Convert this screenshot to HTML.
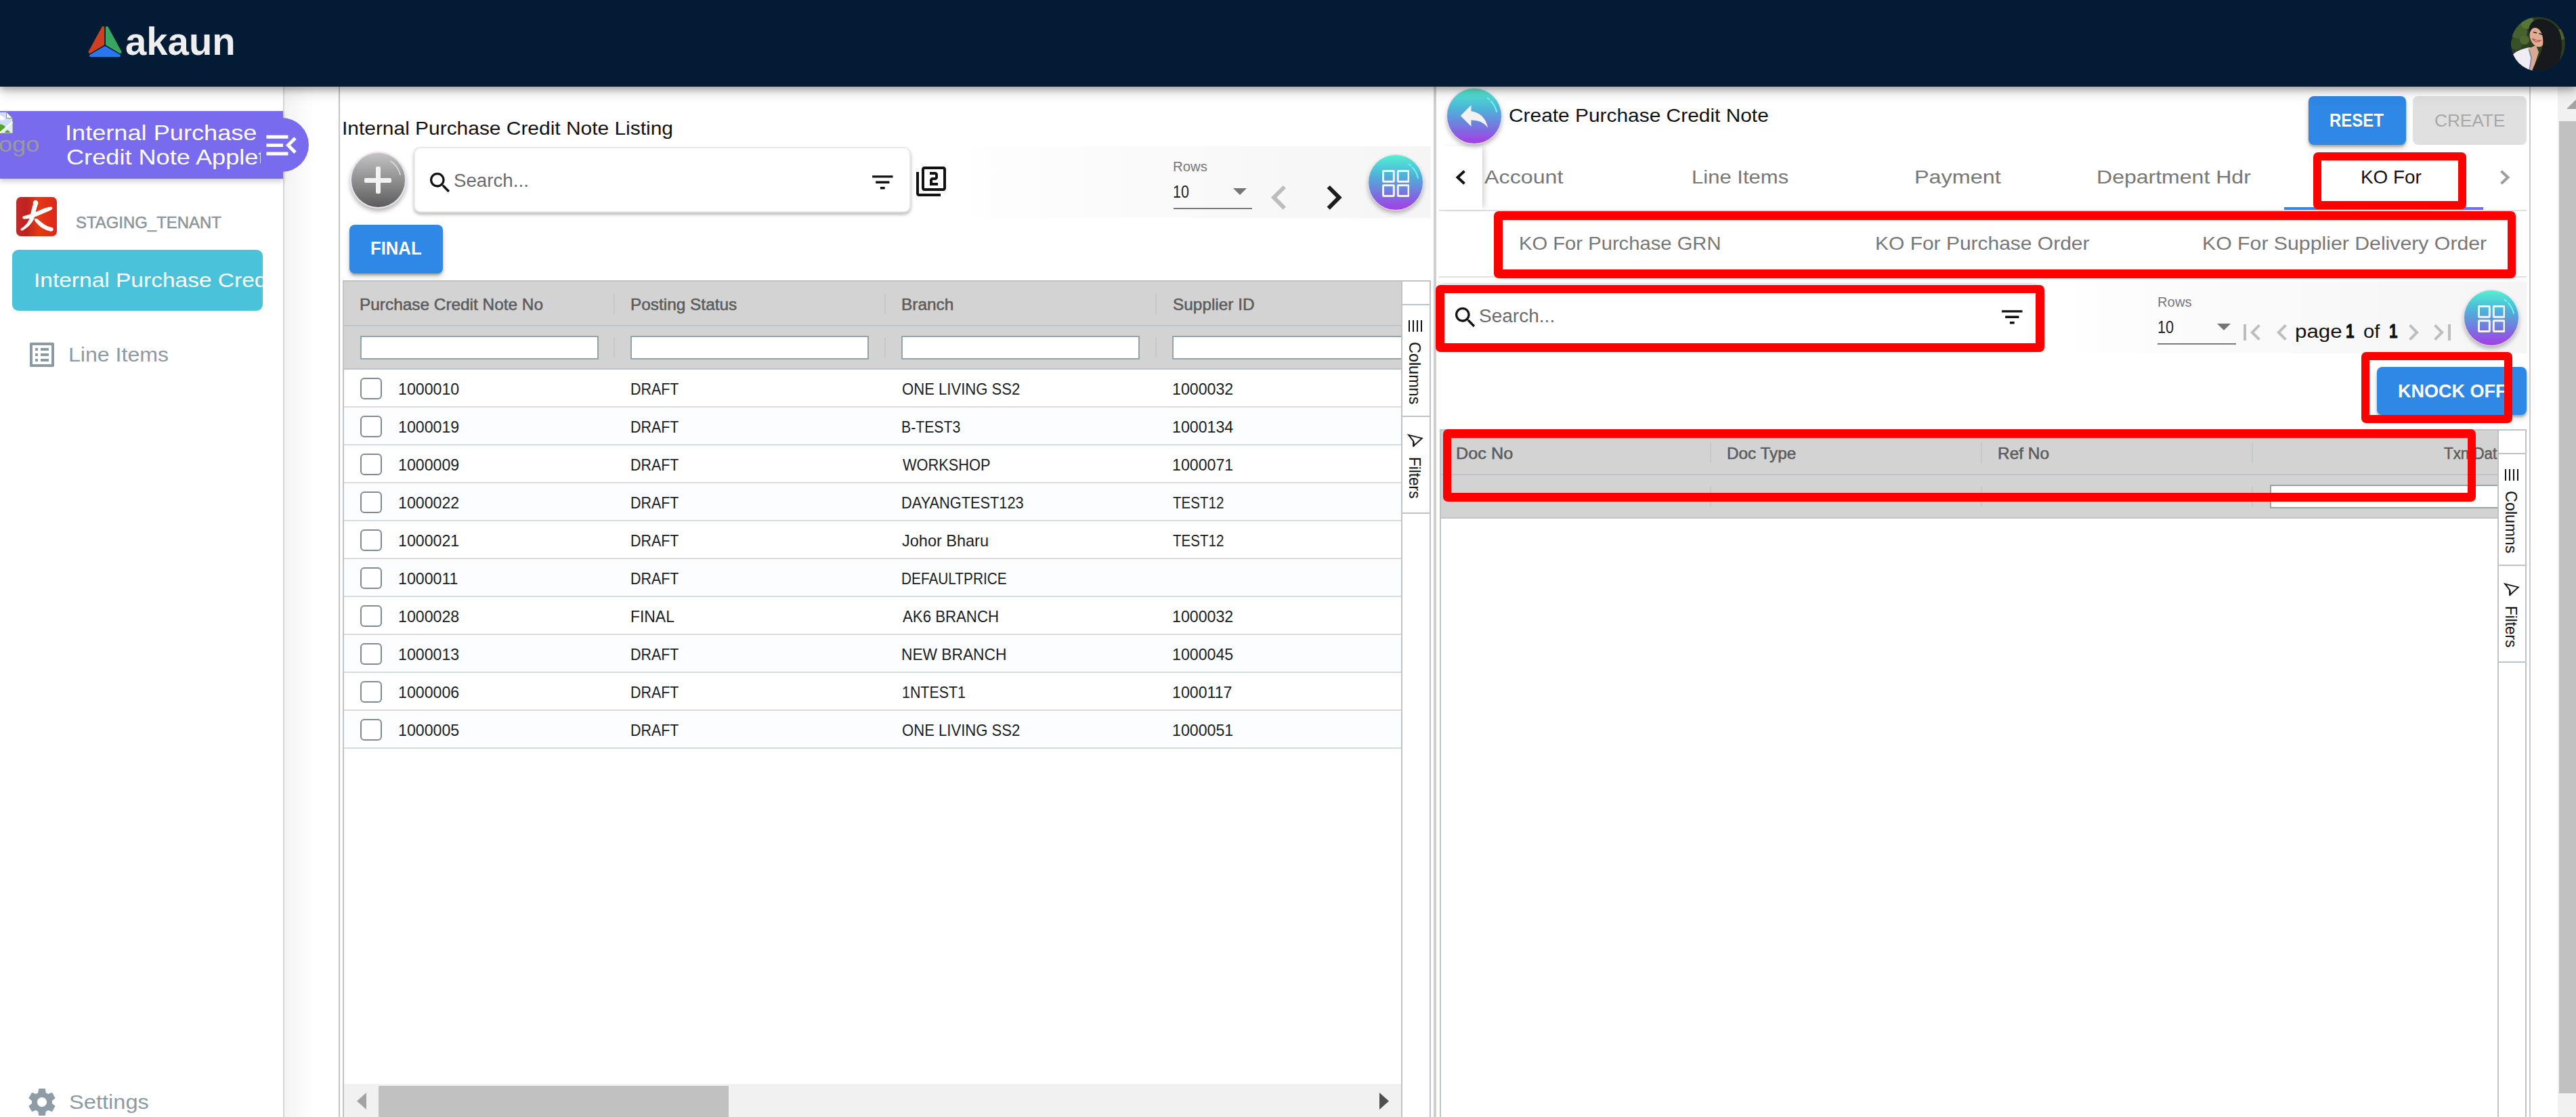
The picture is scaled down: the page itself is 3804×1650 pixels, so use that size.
<!DOCTYPE html>
<html lang="en"><head><meta charset="utf-8"><title>Internal Purchase Credit Note</title>
<style>
html,body{margin:0;padding:0;background:#fff;}
body{width:3804px;height:1650px;overflow:hidden;font-family:"Liberation Sans",sans-serif;}
.page{position:relative;width:3804px;height:1650px;overflow:hidden;background:#fff;}
.a{position:absolute;box-sizing:border-box;}
.t{position:absolute;white-space:nowrap;transform-origin:0 50%;}
.red{position:absolute;box-sizing:border-box;border:12.8px solid #fe0000;border-radius:7px;z-index:50;}
.btn{position:absolute;box-sizing:border-box;border-radius:8px;overflow:hidden;}
.blue{background:#2f88e6;box-shadow:0 3px 3px rgba(0,0,0,.22),0 5px 8px rgba(0,0,0,.16);}
.circ{position:absolute;box-sizing:border-box;width:82px;height:83px;border-radius:50%;border:1.5px solid rgba(232,220,242,.95);
 background:linear-gradient(180deg,#58f0d0 0%,#4fd2d6 18%,#4db4d8 36%,#6490dc 56%,#7f6be0 75%,#a63ee6 100%);box-shadow:0 4px 6px rgba(0,0,0,.28);}
.cb{position:absolute;box-sizing:border-box;width:32px;height:32px;border:2px solid #7f8c8d;border-radius:6px;background:#fff;}
.fi{position:absolute;box-sizing:border-box;height:35px;border:2px solid #95a5a6;background:#fff;}
.sep{position:absolute;width:2px;background:#c4c9cc;}
.rot{position:absolute;white-space:nowrap;transform-origin:0 0;transform:rotate(90deg);font-size:24px;line-height:24px;color:#111;}
</style></head><body><div class="page">
<div class="a" style="left:0px;top:128px;width:419px;height:1522px;background:#fff;"></div>
<div class="a" style="left:418px;top:128px;width:2px;height:1522px;background:#d6d6d6;"></div>
<div class="a" style="left:420px;top:128px;width:80px;height:1522px;background:linear-gradient(90deg,#f3f3f3 0%,#fbfbfb 35%,#fff 55%);"></div>
<div class="a" style="left:500px;top:128px;width:2px;height:1522px;background:#c4c4c4;"></div>
<div class="a" style="left:0;top:164px;width:418px;height:100px;background:#796bee;box-shadow:0 4px 7px rgba(0,0,0,.2);"></div>
<div class="a" style="left:376px;top:174px;width:80px;height:80px;border-radius:50%;background:#796bee;"></div>
<div class="a" style="left:0;top:164px;width:460px;height:100px;overflow:hidden;">
<svg class="a" style="left:-12.7px;top:0.5px;" width="32" height="32" viewBox="0 0 32 32"><path d="M0.5 0.5H22.5L31.5 9.5V31.5H0.5z" fill="#cfdef7" stroke="#8e8e8e" stroke-width="1"/><circle cx="13.5" cy="9" r="3.6" fill="#fff"/><circle cx="17.5" cy="10.2" r="2.6" fill="#fff"/><path d="M2 31C7 15 19 14 26 31z" fill="#57a52e"/><path d="M13 31.5L31.5 15.5V31.5z" fill="#e3ecfb"/><path d="M12 32L31.5 15" stroke="#fff" stroke-width="2.2"/><path d="M20 31C22 27 25 25 28 31z" fill="#57a52e"/><path d="M22.5 0.5V9.5H31.5z" fill="#fff" stroke="#8e8e8e" stroke-width="1" stroke-linejoin="round"/></svg>
<span class="t" style="left:-9.75px;top:33.00px;font-size:32px;line-height:32px;color:#9a9a9a;transform:scaleX(1.1275);">logo</span>
<span class="t" style="left:95.61px;top:16.20px;font-size:32px;line-height:32px;color:#fff;transform:scaleX(1.1301);">Internal Purchase</span>
<div class="a" style="left:0;top:0;width:385px;height:100px;overflow:hidden;"><span class="t" style="left:97.87px;top:51.50px;font-size:32px;line-height:32px;color:#fff;transform:scaleX(1.1300);">Credit Note Applet</span></div>
</div>
<svg class="a" style="left:386.2px;top:184.9px;" width="59.2" height="59.2" viewBox="0 0 24 24"><path fill="#fff" d="M3 18h13v-2H3v2zm0-5h10v-2H3v2zm0-7v2h13V6H3zm18 9.59L17.42 12 21 8.41 19.59 7l-5 5 5 5L21 15.59z"/></svg>
<div class="a" style="left:24px;top:291px;width:60px;height:58px;border-radius:7px;background:linear-gradient(90deg,#c22a2a 0%,#bf2320 25%,#e23a12 55%,#e0241a 100%);"></div>
<svg class="a" style="left:24px;top:291px;" width="60" height="58" viewBox="0 0 60 58"><g fill="#fff"><path d="M27 5C31 3.500 34 8 31.500 12C29.500 17 28.500 24 26.500 31C23.500 39 17 45.500 9 49.500C6.500 50.500 5.500 47.500 8 46C14 42 18 37 20 30C22 23 23 15.500 25 11C24 9 25 6 27 5Z"/><path d="M10 28.500C18 26.500 27 23.500 35 19.500C41 16.500 47 14.500 52 14.500C54.500 15.500 53.500 18 51 19.500C44 22.500 37 25.500 30 28.500C24 30.500 17 32.500 12 32.500C9.500 32.500 8.500 30 10 28.500Z"/><path d="M26.500 32C31 30.500 34 35 38 38C43 42 49 44.500 54 45.500C56 49 53.500 51.500 50 50.500C42 48.500 35 44.500 31 39.500C29 37.500 27 35 26.500 32Z"/></g></svg>
<div class="a" style="left:18px;top:369px;width:370px;height:90px;border-radius:9px;background:#4ac3da;overflow:hidden;"><span class="t" style="left:32.35px;top:29.90px;font-size:30px;line-height:30px;color:#fff;transform:scaleX(1.1165);">Internal Purchase Credit Note</span></div>
<svg class="a" style="left:37.8px;top:500px;" width="48" height="48" viewBox="0 0 24 24"><path fill="#8c9aa3" d="M19 5v14H5V5h14m1.1-2H3.9c-.5 0-.9.4-.9.9v16.2c0 .4.4.9.9.9h16.2c.4 0 .9-.5.9-.9V3.9c0-.5-.5-.9-.9-.9zM11 7h6v2h-6V7zm0 4h6v2h-6v-2zm0 4h6v2h-6zM7 7h2v2H7zm0 4h2v2H7zm0 4h2v2H7z"/></svg>
<svg class="a" style="left:38.2px;top:1604px;" width="48" height="48" viewBox="0 0 24 24"><path fill="#8d9ca6" d="M19.43 12.98c.04-.32.07-.64.07-.98s-.03-.66-.07-.98l2.11-1.65c.19-.15.24-.42.12-.64l-2-3.46c-.12-.22-.39-.3-.61-.22l-2.49 1c-.52-.4-1.08-.73-1.69-.98l-.38-2.65C14.46 2.18 14.25 2 14 2h-4c-.25 0-.46.18-.49.42l-.38 2.65c-.61.25-1.17.59-1.69.98l-2.49-1c-.23-.09-.49 0-.61.22l-2 3.46c-.13.22-.07.49.12.64l2.11 1.65c-.04.32-.07.65-.07.98s.03.66.07.98l-2.11 1.65c-.19.15-.24.42-.12.64l2 3.46c.12.22.39.3.61.22l2.49-1c.52.4 1.08.73 1.69.98l.38 2.65c.03.24.24.42.49.42h4c.25 0 .46-.18.49-.42l.38-2.65c.61-.25 1.17-.59 1.69-.98l2.49 1c.23.09.49 0 .61-.22l2-3.46c.12-.22.07-.49-.12-.64l-2.11-1.65zM12 15.5c-1.93 0-3.5-1.57-3.5-3.5s1.57-3.5 3.5-3.5 3.5 1.57 3.5 3.5-1.57 3.5-3.5 3.5z"/></svg>
<div class="a" style="left:1400px;top:216px;width:713px;height:106px;background:linear-gradient(90deg,#fff 0%,#fcfcfc 20%,#fafafa 42%,#f7f7f7 75%,#f5f5f5 100%);"></div>
<div class="a" style="left:516.5px;top:224px;width:83px;height:84px;border-radius:50%;border:2px solid #e9e2ee;background:linear-gradient(180deg,#c4c4c4 0%,#9a9a9a 40%,#5c5c5c 100%);box-shadow:0 4px 6px rgba(0,0,0,.3);"></div>
<div class="a" style="left:538px;top:262.5px;width:40px;height:7px;background:#f2f2f2;border-radius:2px;"></div>
<div class="a" style="left:554.5px;top:246px;width:7px;height:40px;background:#f2f2f2;border-radius:2px;"></div>
<svg class="a" style="left:517px;top:225px;" width="82" height="82" viewBox="0 0 82 82"><path d="M60 13a34 34 0 0 1 14 20" fill="none" stroke="#dcdcdc" stroke-width="1.6" stroke-linecap="round"/></svg>
<div class="a" style="left:611px;top:217px;width:733.5px;height:97px;border-radius:10px;background:#fff;border:2px solid #e8e8e8;box-shadow:0 3px 5px rgba(0,0,0,.28);"></div>
<svg class="a" style="left:630px;top:250px;" width="40" height="40" viewBox="0 0 24 24"><path fill="#111" d="M15.5 14h-.79l-.28-.27C15.41 12.59 16 11.11 16 9.5 16 5.91 13.09 3 9.5 3S3 5.91 3 9.5 5.91 16 9.5 16c1.61 0 3.09-.59 4.23-1.57l.27.28v.79l5 4.99L20.49 19l-4.99-5zm-6 0C7.01 14 5 11.99 5 9.5S7.01 5 9.5 5 14 7.01 14 9.5 11.99 14 9.5 14z"/></svg>
<svg class="a" style="left:1282.5px;top:248.6px;" width="40.6" height="40.6" viewBox="0 0 24 24"><path fill="#111" d="M10 18h4v-2h-4v2zM3 6v2h18V6H3zm3 7h12v-2H6v2z"/></svg>
<svg class="a" style="left:1351px;top:244px;" width="48" height="48" viewBox="0 0 24 24"><path fill="#111" d="M3 5H1v16c0 1.1.9 2 2 2h16v-2H3V5zm18-4H7c-1.1 0-2 .9-2 2v14c0 1.1.9 2 2 2h14c1.1 0 2-.9 2-2V3c0-1.1-.9-2-2-2zm0 16H7V3h14v14zm-4-4h-4v-2h2c1.1 0 2-.89 2-2V7c0-1.11-.9-2-2-2h-4v2h4v2h-2c-1.1 0-2 .89-2 2v4h6v-2z"/></svg>
<svg class="a" style="left:1821px;top:278px;" width="20" height="10" viewBox="0 0 20 10"><path d="M0 0h20L10 10z" fill="#757575"/></svg>
<div class="a" style="left:1733px;top:307px;width:116px;height:2px;background:#7a7a7a;"></div>
<svg class="a" style="left:1853px;top:256px;" width="71.5" height="71.5" viewBox="0 0 24 24"><path fill="#bdbdbd" d="M15.41 7.41L14 6l-6 6 6 6 1.41-1.41L10.83 12z"/></svg>
<svg class="a" style="left:1933.5px;top:256px;" width="71.5" height="71.5" viewBox="0 0 24 24"><path fill="#1d1d1d" d="M10 6L8.59 7.41 13.17 12l-4.58 4.59L10 18l6-6z"/></svg>
<div class="circ" style="left:2020px;top:228px;"></div><svg class="a" style="left:2020px;top:229px;" width="82" height="82" viewBox="0 0 82 82"><path d="M60.5 13.8a34 34 0 0 1 13.6 20.2" fill="none" stroke="#79f3ee" stroke-width="2" stroke-linecap="round" stroke-dasharray="3.5 3.5 30"/></svg>
<svg class="a" style="left:2040.7px;top:250.8px;" width="40.6" height="40" viewBox="0 0 40.6 40" fill="none" stroke="#f6f4f5" stroke-width="3"><rect x="1.5" y="1.5" width="15.8" height="15.8" rx="0.8"/><rect x="23.3" y="1.5" width="15.8" height="15.8" rx="0.8"/><rect x="1.5" y="22.7" width="15.8" height="15.8" rx="0.8"/><rect x="23.3" y="22.7" width="15.8" height="15.8" rx="0.8"/></svg>
<div class="btn blue" style="left:516px;top:332px;width:138px;height:72px;"></div>
<div class="a" style="left:506px;top:414px;width:1607px;height:1240px;border:2px solid #bdc3c7;background:#fff;"></div>
<div class="a" style="left:508px;top:416px;width:1561px;height:1234px;overflow:hidden;">
<div class="a" style="left:0px;top:0px;width:1561px;height:128px;background:#d3d3d3;"></div>
<div class="a" style="left:0px;top:64px;width:1561px;height:2px;background:#bdc3c7;"></div>
<div class="a" style="left:0px;top:128px;width:1561px;height:2px;background:#bdc3c7;"></div>
<div class="sep" style="left:398px;top:16.5px;height:31px;"></div>
<div class="sep" style="left:398px;top:81.5px;height:30px;"></div>
<div class="sep" style="left:798px;top:16.5px;height:31px;"></div>
<div class="sep" style="left:798px;top:81.5px;height:30px;"></div>
<div class="sep" style="left:1198px;top:16.5px;height:31px;"></div>
<div class="sep" style="left:1198px;top:81.5px;height:30px;"></div>
<div class="fi" style="left:24px;top:79.5px;width:352px;"></div>
<div class="fi" style="left:423px;top:79.5px;width:352px;"></div>
<div class="fi" style="left:823px;top:79.5px;width:352px;"></div>
<div class="fi" style="left:1223px;top:79.5px;width:352px;"></div>
<div class="a" style="left:0px;top:130px;width:1561px;height:56px;background:#fff;border-bottom:2px solid #d9dcde;"></div>
<div class="cb" style="left:24px;top:142px;"></div>
<div class="a" style="left:0px;top:186px;width:1561px;height:56px;background:#fcfdfe;border-bottom:2px solid #d9dcde;"></div>
<div class="cb" style="left:24px;top:198px;"></div>
<div class="a" style="left:0px;top:242px;width:1561px;height:56px;background:#fff;border-bottom:2px solid #d9dcde;"></div>
<div class="cb" style="left:24px;top:254px;"></div>
<div class="a" style="left:0px;top:298px;width:1561px;height:56px;background:#fcfdfe;border-bottom:2px solid #d9dcde;"></div>
<div class="cb" style="left:24px;top:310px;"></div>
<div class="a" style="left:0px;top:354px;width:1561px;height:56px;background:#fff;border-bottom:2px solid #d9dcde;"></div>
<div class="cb" style="left:24px;top:366px;"></div>
<div class="a" style="left:0px;top:410px;width:1561px;height:56px;background:#fcfdfe;border-bottom:2px solid #d9dcde;"></div>
<div class="cb" style="left:24px;top:422px;"></div>
<div class="a" style="left:0px;top:466px;width:1561px;height:56px;background:#fff;border-bottom:2px solid #d9dcde;"></div>
<div class="cb" style="left:24px;top:478px;"></div>
<div class="a" style="left:0px;top:522px;width:1561px;height:56px;background:#fcfdfe;border-bottom:2px solid #d9dcde;"></div>
<div class="cb" style="left:24px;top:534px;"></div>
<div class="a" style="left:0px;top:578px;width:1561px;height:56px;background:#fff;border-bottom:2px solid #d9dcde;"></div>
<div class="cb" style="left:24px;top:590px;"></div>
<div class="a" style="left:0px;top:634px;width:1561px;height:56px;background:#fcfdfe;border-bottom:2px solid #d9dcde;"></div>
<div class="cb" style="left:24px;top:646px;"></div>
<span class="t" style="left:22.97px;top:21.70px;font-size:24px;line-height:24px;color:#5c5c5c;transform:scaleX(1.0159);-webkit-text-stroke:0.55px #5c5c5c;">Purchase Credit Note No</span>
<span class="t" style="left:422.77px;top:21.70px;font-size:24px;line-height:24px;color:#5c5c5c;transform:scaleX(1.0159);-webkit-text-stroke:0.55px #5c5c5c;">Posting Status</span>
<span class="t" style="left:822.77px;top:21.70px;font-size:24px;line-height:24px;color:#5c5c5c;transform:scaleX(1.0159);-webkit-text-stroke:0.55px #5c5c5c;">Branch</span>
<span class="t" style="left:1223.78px;top:21.70px;font-size:24px;line-height:24px;color:#5c5c5c;transform:scaleX(1.0159);-webkit-text-stroke:0.55px #5c5c5c;">Supplier ID</span>
<span class="t" style="left:80.47px;top:147.30px;font-size:24px;line-height:24px;color:#181d1f;transform:scaleX(0.9648);">1000010</span>
<span class="t" style="left:423.02px;top:147.30px;font-size:24px;line-height:24px;color:#181d1f;transform:scaleX(0.8923);">DRAFT</span>
<span class="t" style="left:823.58px;top:147.30px;font-size:24px;line-height:24px;color:#181d1f;transform:scaleX(0.9203);">ONE LIVING SS2</span>
<span class="t" style="left:1223.27px;top:147.30px;font-size:24px;line-height:24px;color:#181d1f;transform:scaleX(0.9648);">1000032</span>
<span class="t" style="left:80.47px;top:203.30px;font-size:24px;line-height:24px;color:#181d1f;transform:scaleX(0.9648);">1000019</span>
<span class="t" style="left:423.02px;top:203.30px;font-size:24px;line-height:24px;color:#181d1f;transform:scaleX(0.8923);">DRAFT</span>
<span class="t" style="left:822.73px;top:203.30px;font-size:24px;line-height:24px;color:#181d1f;transform:scaleX(0.8833);">B-TEST3</span>
<span class="t" style="left:1223.27px;top:203.30px;font-size:24px;line-height:24px;color:#181d1f;transform:scaleX(0.9648);">1000134</span>
<span class="t" style="left:80.47px;top:259.30px;font-size:24px;line-height:24px;color:#181d1f;transform:scaleX(0.9648);">1000009</span>
<span class="t" style="left:423.02px;top:259.30px;font-size:24px;line-height:24px;color:#181d1f;transform:scaleX(0.8923);">DRAFT</span>
<span class="t" style="left:824.50px;top:259.30px;font-size:24px;line-height:24px;color:#181d1f;transform:scaleX(0.9085);">WORKSHOP</span>
<span class="t" style="left:1223.27px;top:259.30px;font-size:24px;line-height:24px;color:#181d1f;transform:scaleX(0.9648);">1000071</span>
<span class="t" style="left:80.47px;top:315.30px;font-size:24px;line-height:24px;color:#181d1f;transform:scaleX(0.9648);">1000022</span>
<span class="t" style="left:423.02px;top:315.30px;font-size:24px;line-height:24px;color:#181d1f;transform:scaleX(0.8923);">DRAFT</span>
<span class="t" style="left:822.69px;top:315.30px;font-size:24px;line-height:24px;color:#181d1f;transform:scaleX(0.9071);">DAYANGTEST123</span>
<span class="t" style="left:1224.20px;top:315.30px;font-size:24px;line-height:24px;color:#181d1f;transform:scaleX(0.8563);">TEST12</span>
<span class="t" style="left:80.47px;top:371.30px;font-size:24px;line-height:24px;color:#181d1f;transform:scaleX(0.9648);">1000021</span>
<span class="t" style="left:423.02px;top:371.30px;font-size:24px;line-height:24px;color:#181d1f;transform:scaleX(0.8923);">DRAFT</span>
<span class="t" style="left:823.52px;top:371.30px;font-size:24px;line-height:24px;color:#181d1f;transform:scaleX(0.9789);">Johor Bharu</span>
<span class="t" style="left:1224.20px;top:371.30px;font-size:24px;line-height:24px;color:#181d1f;transform:scaleX(0.8563);">TEST12</span>
<span class="t" style="left:80.47px;top:427.30px;font-size:24px;line-height:24px;color:#181d1f;transform:scaleX(0.9648);">1000011</span>
<span class="t" style="left:423.02px;top:427.30px;font-size:24px;line-height:24px;color:#181d1f;transform:scaleX(0.8923);">DRAFT</span>
<span class="t" style="left:822.77px;top:427.30px;font-size:24px;line-height:24px;color:#181d1f;transform:scaleX(0.8661);">DEFAULTPRICE</span>
<span class="t" style="left:80.47px;top:483.30px;font-size:24px;line-height:24px;color:#181d1f;transform:scaleX(0.9648);">1000028</span>
<span class="t" style="left:422.89px;top:483.30px;font-size:24px;line-height:24px;color:#181d1f;transform:scaleX(0.9538);">FINAL</span>
<span class="t" style="left:824.50px;top:483.30px;font-size:24px;line-height:24px;color:#181d1f;transform:scaleX(0.9257);">AK6 BRANCH</span>
<span class="t" style="left:1223.27px;top:483.30px;font-size:24px;line-height:24px;color:#181d1f;transform:scaleX(0.9648);">1000032</span>
<span class="t" style="left:80.47px;top:539.30px;font-size:24px;line-height:24px;color:#181d1f;transform:scaleX(0.9648);">1000013</span>
<span class="t" style="left:423.02px;top:539.30px;font-size:24px;line-height:24px;color:#181d1f;transform:scaleX(0.8923);">DRAFT</span>
<span class="t" style="left:822.61px;top:539.30px;font-size:24px;line-height:24px;color:#181d1f;transform:scaleX(0.9469);">NEW BRANCH</span>
<span class="t" style="left:1223.27px;top:539.30px;font-size:24px;line-height:24px;color:#181d1f;transform:scaleX(0.9648);">1000045</span>
<span class="t" style="left:80.47px;top:595.30px;font-size:24px;line-height:24px;color:#181d1f;transform:scaleX(0.9648);">1000006</span>
<span class="t" style="left:423.02px;top:595.30px;font-size:24px;line-height:24px;color:#181d1f;transform:scaleX(0.8923);">DRAFT</span>
<span class="t" style="left:824.22px;top:595.30px;font-size:24px;line-height:24px;color:#181d1f;transform:scaleX(0.8922);">1NTEST1</span>
<span class="t" style="left:1223.27px;top:595.30px;font-size:24px;line-height:24px;color:#181d1f;transform:scaleX(0.9648);">1000117</span>
<span class="t" style="left:80.47px;top:651.30px;font-size:24px;line-height:24px;color:#181d1f;transform:scaleX(0.9648);">1000005</span>
<span class="t" style="left:423.02px;top:651.30px;font-size:24px;line-height:24px;color:#181d1f;transform:scaleX(0.8923);">DRAFT</span>
<span class="t" style="left:823.58px;top:651.30px;font-size:24px;line-height:24px;color:#181d1f;transform:scaleX(0.9203);">ONE LIVING SS2</span>
<span class="t" style="left:1223.27px;top:651.30px;font-size:24px;line-height:24px;color:#181d1f;transform:scaleX(0.9648);">1000051</span>
<div class="a" style="left:0px;top:1185px;width:1561px;height:49px;background:#f1f1f1;"></div>
<div class="a" style="left:51px;top:1188px;width:517px;height:46px;background:#c1c1c1;"></div>
<svg class="a" style="left:19px;top:1198px;" width="14" height="25" viewBox="0 0 14 25"><path d="M14 0v25L0 12.5z" fill="#a3a3a3"/></svg>
<svg class="a" style="left:1529px;top:1198px;" width="14" height="25" viewBox="0 0 14 25"><path d="M0 0v25l14-12.5z" fill="#505050"/></svg>
</div>
<div class="a" style="left:2069px;top:416px;width:2px;height:1650px;background:#bdc3c7;"></div><div class="a" style="left:2071px;top:448.5px;width:40px;height:2px;background:#bdc3c7;"></div><div class="a" style="left:2071px;top:614px;width:40px;height:2px;background:#bdc3c7;"></div><div class="a" style="left:2071px;top:757px;width:40px;height:2px;background:#bdc3c7;"></div><div class="a" style="left:2079.6px;top:473px;width:2.2px;height:17px;background:#111;"></div><div class="a" style="left:2085.7999999999997px;top:473px;width:2.2px;height:17px;background:#111;"></div><div class="a" style="left:2092.0px;top:473px;width:2.2px;height:17px;background:#111;"></div><div class="a" style="left:2098.2px;top:473px;width:2.2px;height:17px;background:#111;"></div><span class="rot" style="left:2101.3px;top:504.5px;transform:rotate(90deg) scaleX(.975);">Columns</span><svg class="a" style="left:2077px;top:639px;" width="26" height="24" viewBox="0 0 26 24"><path d="M3.2 3.6L22.8 8.4L10.5 19.6L10.2 12.6z" fill="none" stroke="#111" stroke-width="1.9" stroke-linejoin="miter"/><path d="M10.3 13.5L10.5 20.5" stroke="#111" stroke-width="2.4"/></svg><span class="rot" style="left:2101.3px;top:674.5px;transform:rotate(90deg) scaleX(.94);">Filters</span>
<div class="a" style="left:2117px;top:128px;width:4px;height:1522px;background:#cfcfcf;"></div>
<div class="btn blue" style="left:3409px;top:142px;width:144px;height:72px;"></div>
<div class="btn" style="left:3563px;top:142px;width:168px;height:72px;background:#e0e0e0;"></div>
<div class="a" style="left:2125px;top:310px;width:1606px;height:2px;background:#e0e0e0;"></div>
<div class="a" style="left:2189px;top:216px;width:1478px;height:96px;overflow:hidden;">
<span class="t" style="left:2.50px;top:31.70px;font-size:28px;line-height:28px;color:#777;transform:scaleX(1.1515);">Account</span>
<span class="t" style="left:308.78px;top:31.70px;font-size:28px;line-height:28px;color:#777;transform:scaleX(1.1087);">Line Items</span>
<span class="t" style="left:638.19px;top:31.70px;font-size:28px;line-height:28px;color:#777;transform:scaleX(1.1565);">Payment</span>
<span class="t" style="left:907.41px;top:31.70px;font-size:28px;line-height:28px;color:#777;transform:scaleX(1.1437);">Department Hdr</span>
<span class="t" style="left:1297.01px;top:31.70px;font-size:28px;line-height:28px;color:#111;transform:scaleX(0.9955);">KO For</span>
<div class="a" style="left:1184px;top:90px;width:320px;height:4px;background:linear-gradient(90deg,#2f88e6 0%,#4f7fe9 55%,#7a68ee 100%);"></div>
</div>
<div class="a" style="left:2125px;top:216px;width:64px;height:94px;background:#fff;box-shadow:6px 0 8px -3px rgba(0,0,0,.18);"></div>
<div class="circ" style="left:2136px;top:130px;"></div><svg class="a" style="left:2136px;top:131px;" width="82" height="82" viewBox="0 0 82 82"><path d="M60.5 13.8a34 34 0 0 1 13.6 20.2" fill="none" stroke="#79f3ee" stroke-width="2" stroke-linecap="round" stroke-dasharray="3.5 3.5 30"/></svg>
<svg class="a" style="left:2150.25px;top:143.75px;" width="54" height="54" viewBox="0 0 24 24"><path fill="#f2f2f2" d="M10 9V5l-7 7 7 7v-4.1c5 0 8.5 1.6 11 5.1-1-5-4-10-11-11z"/></svg>
<svg class="a" style="left:2140px;top:245px;" width="34" height="34" viewBox="0 0 34 34"><path d="M22.5 7.8L12.5 17l10 9.2" fill="none" stroke="#111" stroke-width="4"/></svg>
<svg class="a" style="left:3682px;top:245px;" width="34" height="34" viewBox="0 0 34 34"><path d="M11.5 7.8L21.5 17l-10 9.2" fill="none" stroke="#9e9e9e" stroke-width="4"/></svg>
<div class="a" style="left:2125px;top:408px;width:1606px;height:2px;background:#e0e0e0;"></div>
<div class="a" style="left:3030px;top:416px;width:701px;height:105.5px;background:linear-gradient(90deg,#fff 0%,#fcfcfc 20%,#fafafa 42%,#f7f7f7 75%,#f5f5f5 100%);"></div>
<div class="a" style="left:2125px;top:417.5px;width:886px;height:98px;border-radius:10px;background:#fff;border:2px solid #e6e6e6;box-shadow:0 3px 5px rgba(0,0,0,.28);"></div>
<svg class="a" style="left:2144.3px;top:449.4px;" width="40" height="40" viewBox="0 0 24 24"><path fill="#111" d="M15.5 14h-.79l-.28-.27C15.41 12.59 16 11.11 16 9.5 16 5.91 13.09 3 9.5 3S3 5.91 3 9.5 5.91 16 9.5 16c1.61 0 3.09-.59 4.23-1.57l.27.28v.79l5 4.99L20.49 19l-4.99-5zm-6 0C7.01 14 5 11.99 5 9.5S7.01 5 9.5 5 14 7.01 14 9.5 11.99 14 9.5 14z"/></svg>
<svg class="a" style="left:2951px;top:448.4px;" width="40.6" height="40.6" viewBox="0 0 24 24"><path fill="#111" d="M10 18h4v-2h-4v2zM3 6v2h18V6H3zm3 7h12v-2H6v2z"/></svg>
<svg class="a" style="left:3274px;top:478px;" width="20" height="10" viewBox="0 0 20 10"><path d="M0 0h20L10 10z" fill="#757575"/></svg>
<div class="a" style="left:3186px;top:507px;width:115.5px;height:2px;background:#7a7a7a;"></div>
<svg class="a" style="left:3300.6px;top:466.5px;" width="48" height="48" viewBox="0 0 24 24"><path fill="#bdbdbd" d="M18.41 16.59L13.82 12l4.59-4.59L17 6l-6 6 6 6zM6 6h2v12H6z"/></svg>
<svg class="a" style="left:3345.6px;top:466.5px;" width="48" height="48" viewBox="0 0 24 24"><path fill="#bdbdbd" d="M15.41 7.41L14 6l-6 6 6 6 1.41-1.41L10.83 12z"/></svg>
<svg class="a" style="left:3539.6px;top:466.5px;" width="48" height="48" viewBox="0 0 24 24"><path fill="#bdbdbd" d="M10 6L8.59 7.41 13.17 12l-4.58 4.59L10 18l6-6z"/></svg>
<svg class="a" style="left:3583.3px;top:466.5px;" width="48" height="48" viewBox="0 0 24 24"><path fill="#bdbdbd" d="M5.59 7.41L10.18 12l-4.59 4.59L7 18l6-6-6-6zM16 6h2v12h-2z"/></svg>
<div class="circ" style="left:3638px;top:428px;"></div><svg class="a" style="left:3638px;top:429px;" width="82" height="82" viewBox="0 0 82 82"><path d="M60.5 13.8a34 34 0 0 1 13.6 20.2" fill="none" stroke="#79f3ee" stroke-width="2" stroke-linecap="round" stroke-dasharray="3.5 3.5 30"/></svg>
<svg class="a" style="left:3658.7px;top:450.8px;" width="40.6" height="40" viewBox="0 0 40.6 40" fill="none" stroke="#f6f4f5" stroke-width="3"><rect x="1.5" y="1.5" width="15.8" height="15.8" rx="0.8"/><rect x="23.3" y="1.5" width="15.8" height="15.8" rx="0.8"/><rect x="1.5" y="22.7" width="15.8" height="15.8" rx="0.8"/><rect x="23.3" y="22.7" width="15.8" height="15.8" rx="0.8"/></svg>
<div class="btn blue" style="left:3510px;top:542px;width:221px;height:71px;"><span class="t" style="left:31.00px;top:22.50px;font-size:27px;line-height:27px;color:#fff;font-weight:700;">KNOCK OFF</span></div>
<div class="a" style="left:2126px;top:634px;width:1605px;height:1020px;border:2px solid #bdc3c7;background:#fff;"></div>
<div class="a" style="left:2128px;top:636px;width:1560px;height:1014px;overflow:hidden;">
<div class="a" style="left:0px;top:0px;width:1560px;height:128px;background:#d3d3d3;"></div>
<div class="a" style="left:0px;top:64px;width:1560px;height:2px;background:#bdc3c7;"></div>
<div class="a" style="left:0px;top:128px;width:1560px;height:2px;background:#bdc3c7;"></div>
<div class="sep" style="left:397px;top:16.5px;height:31px;"></div>
<div class="sep" style="left:397px;top:81.5px;height:30px;"></div>
<div class="sep" style="left:797px;top:16.5px;height:31px;"></div>
<div class="sep" style="left:797px;top:81.5px;height:30px;"></div>
<div class="sep" style="left:1197px;top:16.5px;height:31px;"></div>
<div class="sep" style="left:1197px;top:81.5px;height:30px;"></div>
<div class="fi" style="left:1223.5px;top:79.5px;width:352px;"></div>
<span class="t" style="left:21.60px;top:21.50px;font-size:24px;line-height:24px;color:#5c5c5c;transform:scaleX(1.0519);-webkit-text-stroke:0.55px #5c5c5c;">Doc No</span>
<span class="t" style="left:421.67px;top:21.50px;font-size:24px;line-height:24px;color:#5c5c5c;transform:scaleX(1.0133);-webkit-text-stroke:0.55px #5c5c5c;">Doc Type</span>
<span class="t" style="left:821.66px;top:21.50px;font-size:24px;line-height:24px;color:#5c5c5c;transform:scaleX(1.0181);-webkit-text-stroke:0.55px #5c5c5c;">Ref No</span>
<span class="t" style="left:1480.90px;top:21.50px;font-size:24px;line-height:24px;color:#5c5c5c;transform:scaleX(0.9312);-webkit-text-stroke:0.55px #5c5c5c;">Txn Date</span>
</div>
<div class="a" style="left:3688px;top:636px;width:2px;height:1650px;background:#bdc3c7;"></div><div class="a" style="left:3690px;top:668.5px;width:40px;height:2px;background:#bdc3c7;"></div><div class="a" style="left:3690px;top:834px;width:40px;height:2px;background:#bdc3c7;"></div><div class="a" style="left:3690px;top:977px;width:40px;height:2px;background:#bdc3c7;"></div><div class="a" style="left:3698.6px;top:693px;width:2.2px;height:17px;background:#111;"></div><div class="a" style="left:3704.7999999999997px;top:693px;width:2.2px;height:17px;background:#111;"></div><div class="a" style="left:3711.0px;top:693px;width:2.2px;height:17px;background:#111;"></div><div class="a" style="left:3717.2px;top:693px;width:2.2px;height:17px;background:#111;"></div><span class="rot" style="left:3720.3px;top:724.5px;transform:rotate(90deg) scaleX(.975);">Columns</span><svg class="a" style="left:3696px;top:859px;" width="26" height="24" viewBox="0 0 26 24"><path d="M3.2 3.6L22.8 8.4L10.5 19.6L10.2 12.6z" fill="none" stroke="#111" stroke-width="1.9" stroke-linejoin="miter"/><path d="M10.3 13.5L10.5 20.5" stroke="#111" stroke-width="2.4"/></svg><span class="rot" style="left:3720.3px;top:894.5px;transform:rotate(90deg) scaleX(.94);">Filters</span>
<div class="a" style="left:3735px;top:128px;width:2px;height:1522px;background:#cbcbcb;"></div>
<div class="a" style="left:3777px;top:128px;width:27px;height:1522px;background:#f1f1f1;"></div>
<div class="a" style="left:3779px;top:179px;width:25px;height:1436px;background:#c1c1c1;"></div>
<svg class="a" style="left:3790px;top:147px;" width="14" height="14" viewBox="0 0 14 14"><path d="M0 14L14 0l14 14z" fill="#a3a3a3"/></svg>
<div class="red" style="left:3416px;top:225px;width:226px;height:84px;"></div>
<div class="red" style="left:2206px;top:311.8px;width:1508.8px;height:99.2px;border-width:13.5px 12.8px 13.5px 13px;"></div>
<div class="red" style="left:2120px;top:421px;width:899px;height:99px;border-width:12.8px 13px 13.1px 13px;"></div>
<div class="red" style="left:3486.5px;top:520.3px;width:223.5px;height:104.4px;"></div>
<div class="red" style="left:2130.6px;top:634px;width:1525px;height:106.7px;border-top-width:13px;border-bottom-width:13.2px;"></div>
<span class="t" style="left:111.80px;top:316.50px;font-size:24px;line-height:24px;color:#8a949a;transform:scaleX(0.9963);-webkit-text-stroke:0.5px #8a949a;">STAGING_TENANT</span>
<span class="t" style="left:100.86px;top:508.50px;font-size:30px;line-height:30px;color:#8c9aa3;transform:scaleX(1.0699);">Line Items</span>
<span class="t" style="left:101.91px;top:1613.00px;font-size:30px;line-height:30px;color:#8c9aa3;transform:scaleX(1.0869);">Settings</span>
<span class="t" style="left:504.56px;top:175.50px;font-size:28px;line-height:28px;color:#111;transform:scaleX(1.0685);">Internal Purchase Credit Note Listing</span>
<span class="t" style="left:670.27px;top:253.70px;font-size:27px;line-height:27px;color:#6b6b6b;transform:scaleX(1.0257);">Search...</span>
<span class="t" style="left:546.60px;top:354.30px;font-size:27px;line-height:27px;color:#fff;font-weight:700;transform:scaleX(0.9506);">FINAL</span>
<span class="t" style="left:1732.46px;top:236.85px;font-size:19.5px;line-height:19.5px;color:#777;transform:scaleX(1.0426);">Rows</span>
<span class="t" style="left:1732.35px;top:269.75px;font-size:26px;line-height:26px;color:#222;transform:scaleX(0.8269);">10</span>
<span class="t" style="left:2228.33px;top:156.80px;font-size:28px;line-height:28px;color:#111;transform:scaleX(1.0675);">Create Purchase Credit Note</span>
<span class="t" style="left:3440.23px;top:164.50px;font-size:27px;line-height:27px;color:#fff;font-weight:700;transform:scaleX(0.8864);">RESET</span>
<span class="t" style="left:3595.00px;top:164.75px;font-size:26.5px;line-height:26.5px;color:#a8a8a8;letter-spacing:-0.200px;">CREATE</span>
<span class="t" style="left:2242.91px;top:345.50px;font-size:28px;line-height:28px;color:#777;transform:scaleX(1.0426);">KO For Purchase GRN</span>
<span class="t" style="left:2768.56px;top:345.50px;font-size:28px;line-height:28px;color:#777;transform:scaleX(1.0703);">KO For Purchase Order</span>
<span class="t" style="left:3251.84px;top:345.50px;font-size:28px;line-height:28px;color:#777;transform:scaleX(1.0801);">KO For Supplier Delivery Order</span>
<span class="t" style="left:2183.96px;top:454.00px;font-size:27px;line-height:27px;color:#6b6b6b;transform:scaleX(1.0381);">Search...</span>
<span class="t" style="left:3185.86px;top:436.55px;font-size:19.5px;line-height:19.5px;color:#777;transform:scaleX(1.0383);">Rows</span>
<span class="t" style="left:3185.74px;top:469.80px;font-size:26px;line-height:26px;color:#222;transform:scaleX(0.8308);">10</span>
<span class="t" style="left:3388.76px;top:476.20px;font-size:28px;line-height:28px;color:#111;transform:scaleX(1.1186);">page</span>
<span class="t" style="left:3463.50px;top:473.70px;font-size:30px;line-height:30px;color:#111;font-weight:700;transform:scaleX(0.7500);-webkit-text-stroke:0.8px #111;">1</span>
<span class="t" style="left:3489.95px;top:476.20px;font-size:28px;line-height:28px;color:#111;transform:scaleX(1.0455);">of</span>
<span class="t" style="left:3527.50px;top:473.70px;font-size:30px;line-height:30px;color:#111;font-weight:700;transform:scaleX(0.7500);-webkit-text-stroke:0.8px #111;">1</span>
<div class="a" style="left:0;top:0;width:3804px;height:128px;background:#041b35;box-shadow:0 4px 10px rgba(0,0,0,.30),0 8px 20px rgba(0,0,0,.14);z-index:60;">
<svg class="a" style="left:126px;top:34px;" width="60" height="56" viewBox="126 34 60 56">
<path d="M152.2 40.8L132.5 77L152.2 65.2z" fill="#cf4021" stroke="#cf4021" stroke-width="4" stroke-linejoin="round"/>
<path d="M157.9 40.8L177.6 77L157.9 65.2z" fill="#38a660" stroke="#38a660" stroke-width="4" stroke-linejoin="round"/>
<path d="M155 70.2L176 82.2L134 82.2z" fill="#2876f0" stroke="#2876f0" stroke-width="4" stroke-linejoin="round"/>
</svg>
<span class="t" style="left:184.86px;top:31.80px;font-size:58px;line-height:58px;color:#eeeeee;font-weight:700;transform:scaleX(0.9704);">akaun</span>
<svg class="a" style="left:3708px;top:25px;" width="80" height="80" viewBox="0 0 80 80">
<defs><clipPath id="av"><circle cx="40" cy="40" r="40"/></clipPath></defs>
<g clip-path="url(#av)">
<rect width="80" height="80" fill="#2d3d20"/>
<circle cx="12" cy="22" r="12" fill="#46602e"/><circle cx="24" cy="8" r="10" fill="#587439"/><circle cx="8" cy="40" r="9" fill="#3a5026"/><circle cx="20" cy="34" r="7" fill="#4d6832"/><circle cx="74" cy="26" r="8" fill="#4a6330"/>
<path d="M1 58c5-7 14-11 27-13l6 6-2 29H8z" fill="#efedf3"/>
<path d="M25 47l12-5 4 10-9 28h-4l1-20z" fill="#d9aa93"/>
<path d="M27 49l3 11-3 20" fill="none" stroke="#6f7fae" stroke-width="1.4"/>
<ellipse cx="39" cy="29" rx="11" ry="15.5" fill="#e0ad93" transform="rotate(-16 39 29)"/>
<path d="M30 9c9-11 34-6 42 14 6 16 2 39-6 57H31c3-9 8-16 12-25 6-13 6-28-1-36-4-4-9-4-12 0-2 3-3 6-3 9-2-7-1-14 3-19z" fill="#17191c"/>
<path d="M31.5 32q5 7 12 3-6 0-12-3z" fill="#fff" stroke="#c2504e" stroke-width="1.3"/>
<path d="M33.5 22.5l4 1M42 24.5l4 1.5" stroke="#2e221e" stroke-width="1.5" stroke-linecap="round"/>
</g></svg>
</div>
</div></body></html>
